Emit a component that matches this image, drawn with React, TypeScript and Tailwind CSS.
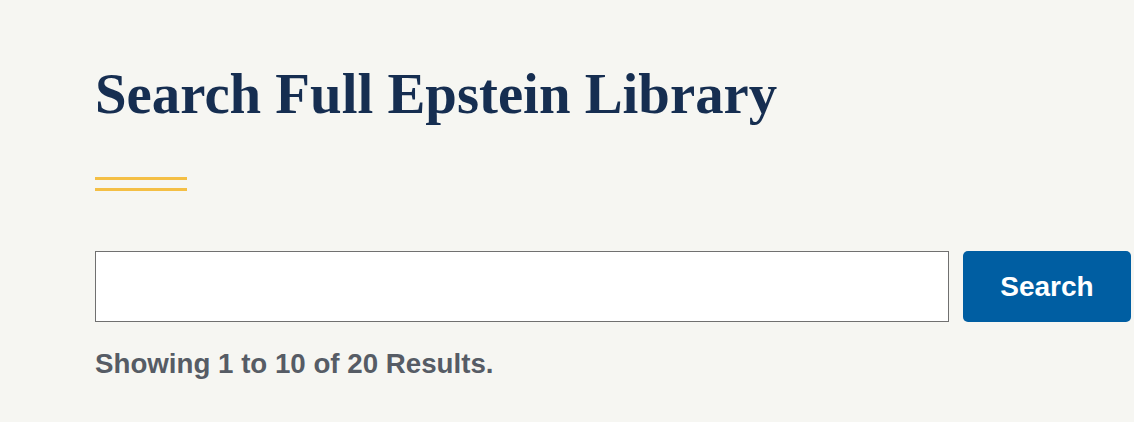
import React from "react";

function App() {
  return (
    <div className="min-h-screen w-full bg-[#f6f6f2] pl-[95px] pt-[66px]">
      <h1 className="text-[56.8px] leading-[56px] font-bold text-[#162e51] font-['Liberation_Serif',serif]">
        Search Full Epstein Library
      </h1>
      <div className="mt-[55px] flex flex-col gap-[8px]">
        <div className="h-[3px] w-[92px] bg-[#f4bf45]" />
        <div className="h-[3px] w-[92px] bg-[#f4bf45]" />
      </div>
      <form
        className="mt-[60px] flex gap-[14px]"
        onSubmit={(e) => e.preventDefault()}
      >
        <input
          type="text"
          className="h-[71px] w-[854px] border border-[#707070] bg-white px-3 text-[20px] outline-none"
        />
        <button
          type="submit"
          className="h-[71px] w-[168px] rounded-[5px] bg-[#005ea2] text-[28px] font-bold text-white font-['Liberation_Sans',sans-serif]"
        >
          Search
        </button>
      </form>
      <p className="mt-[28px] text-[27.7px] leading-[28px] font-bold text-[#565c65] font-['Liberation_Sans',sans-serif]">
        Showing 1 to 10 of 20 Results.
      </p>
    </div>
  );
}

export default App;
